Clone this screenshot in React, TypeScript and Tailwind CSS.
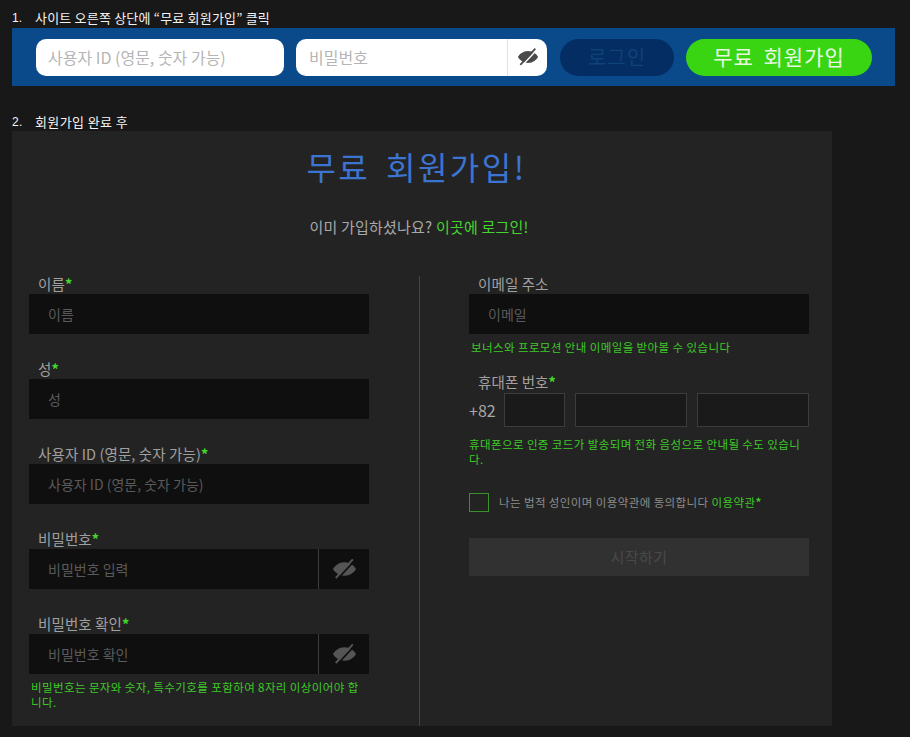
import React from 'react';

function EyeOff({ className, gap }: { className: string; gap: string }) {
  return (
    <svg viewBox="0 0 24 20" className={className} fill="currentColor">
      <path d="M12 3.500C6.500 3.500 2.600 7 1 10c1.600 3 5.500 6.500 11 6.500S21.400 13 23 10c-1.600-3-5.500-6.500-11-6.500z" />
      <path d="M21.500 2.300L5.800 19" stroke={gap} strokeWidth="1.600" fill="none" />
      <path d="M20 0.800L3.600 18.600" stroke="currentColor" strokeWidth="1.900" fill="none" />
    </svg>
  );
}

function Label({ text, required }: { text: string; required?: boolean }) {
  return (
    <div className="pl-[9px] h-[18px] text-[14.5px] leading-[15px] tracking-[0.1px] text-[#a0a0a0]">
      {text}
      {required && <span className="text-[#44d62c] font-bold">*</span>}
    </div>
  );
}

function DarkInput({ placeholder, eye }: { placeholder: string; eye?: boolean }) {
  return (
    <div className="flex h-[40px] w-[340px] items-center bg-[#0f0f0f]">
      <div className="flex-1 pl-[19px] text-[14px] text-[#5a5a5a]">{placeholder}</div>
      {eye && (
        <div className="flex h-full w-[51px] items-center justify-center border-l border-[#3c3c3c] text-[#555555]">
          <EyeOff className="h-[22px] w-[25px]" gap="#0f0f0f" />
        </div>
      )}
    </div>
  );
}

function Field({ label, placeholder, eye, mb }: { label: string; placeholder: string; eye?: boolean; mb?: string }) {
  return (
    <div className={mb}>
      <Label text={label} required />
      <DarkInput placeholder={placeholder} eye={eye} />
    </div>
  );
}

export default function App() {
  return (
    <div className="min-h-[737px] overflow-hidden bg-[#181818] pt-[10px] pl-[12px] font-['Noto_Sans_CJK_KR',sans-serif]">
      <div className="flex h-[18px] items-center pb-[2px] text-[13px] tracking-[0.2px] text-[#f4f4f4]">
        <span className="w-[23px] font-['Liberation_Sans'] text-[12px]">1.</span>
        <span>사이트 오른쪽 상단에 “무료 회원가입” 클릭</span>
      </div>

      {/* login bar */}
      <div className="flex h-[58px] w-[883px] items-center bg-[#0a4a8a] pl-[24px]">
        <div className="flex h-[37px] w-[248px] items-center rounded-[10px] bg-white pl-[12px] text-[16px] text-[#b5b5b5]">
          사용자 ID (영문, 숫자 가능)
        </div>
        <div className="ml-[12px] flex h-[37px] w-[251px] items-center rounded-[10px] bg-white">
          <div className="flex-1 pl-[13px] text-[16px] text-[#b5b5b5]">비밀번호</div>
          <div className="flex h-full w-[40px] items-center justify-center border-l border-[#e2e2e2] text-[#4a4a4a]">
            <EyeOff className="h-[20px] w-[22px]" gap="#ffffff" />
          </div>
        </div>
        <div className="ml-[13px] flex h-[37px] w-[114px] items-center justify-center rounded-full bg-[#032d63] text-[20px] tracking-[1px] text-[#0f4278]">
          로그인
        </div>
        <div className="ml-[12px] flex h-[37px] w-[186px] items-center justify-center rounded-full bg-[#39d513] text-[21px] tracking-[1px] [word-spacing:4px] text-[#e8f8e0]">
          무료 회원가입
        </div>
      </div>

      <div className="mt-[27px] flex h-[18px] items-center text-[13px] tracking-[0.4px] text-[#f4f4f4]">
        <span className="w-[23px] font-['Liberation_Sans'] text-[12px]">2.</span>
        <span>회원가입 완료 후</span>
      </div>

      {/* signup card */}
      <div className="h-[595px] w-[820px] bg-[#232323]">
        <div className="h-[145px] pr-[12px] text-center">
          <div className="pl-[1px] pt-[14px] text-[32px] leading-[42px] tracking-[2.5px] [word-spacing:6px] text-[#3b74d1]">
            무료 회원가입!
          </div>
          <div className="mt-[30px] pl-[6px] text-[15px] leading-[20px] tracking-[0.2px] text-[#a8a8a8]">
            이미 가입하셨나요? <span className="text-[#44d62c]">이곳에 로그인!</span>
          </div>
        </div>

        <div className="flex h-[450px]">
          {/* left column */}
          <div className="w-[408px] border-r border-[#444444] pl-[17px]">
            <Field label="이름" placeholder="이름" mb="mb-[27px]" />
            <Field label="성" placeholder="성" mb="mb-[27px]" />
            <Field label="사용자 ID (영문, 숫자 가능)" placeholder="사용자 ID (영문, 숫자 가능)" mb="mb-[27px]" />
            <Field label="비밀번호" placeholder="비밀번호 입력" eye mb="mb-[27px]" />
            <Field label="비밀번호 확인" placeholder="비밀번호 확인" eye />
            <p className="mt-[6px] w-[338px] pl-[2px] text-[11.5px] leading-[15px] tracking-[0.4px] text-[#3ec928]">
              비밀번호는 문자와 숫자, 특수기호를 포함하여 8자리 이상이어야 합니다.
            </p>
          </div>

          {/* right column */}
          <div className="w-[340px] pl-[49px] box-content">
            <Label text="이메일 주소" />
            <DarkInput placeholder="이메일" />
            <p className="mt-[6px] pl-[2px] text-[11.5px] leading-[15px] tracking-[0.4px] text-[#3ec928]">
              보너스와 프로모션 안내 이메일을 받아볼 수 있습니다
            </p>
            <div className="mt-[19px] mb-[1px]">
              <Label text="휴대폰 번호" required />
            </div>
            <div className="flex h-[34px] w-[340px] items-center">
              <span className="w-[35px] text-[16px] text-[#a8a8a8]">+82</span>
              <div className="h-[34px] w-[61px] border border-[#3c3c3c] bg-[#1a1a1a]" />
              <div className="ml-[10px] h-[34px] w-[112px] border border-[#3c3c3c] bg-[#1a1a1a]" />
              <div className="ml-[10px] h-[34px] w-[112px] border border-[#3c3c3c] bg-[#1a1a1a]" />
            </div>
            <p className="mt-[10px] w-[340px] text-[11.5px] leading-[15px] tracking-[0.4px] text-[#3ec928]">
              휴대폰으로 인증 코드가 발송되며 전화 음성으로 안내될 수도 있습니다.
            </p>
            <div className="mt-[26px] flex h-[19px] items-center">
              <div className="h-[19px] w-[20px] border border-[#3d8f2c]" />
              <span className="ml-[10px] text-[11.5px] tracking-[0.4px] text-[#8c8c8c]">
                나는 법적 성인이며 이용약관에 동의합니다{' '}
                <span className="text-[#3ec928]">이용약관<span className="font-bold">*</span></span>
              </span>
            </div>
            <div className="mt-[26px] flex h-[38px] w-[340px] items-center justify-center bg-[#313131] text-[15px] tracking-[0.5px] text-[#4a4a4a]">
              시작하기
            </div>
          </div>
        </div>
      </div>
    </div>
  );
}
